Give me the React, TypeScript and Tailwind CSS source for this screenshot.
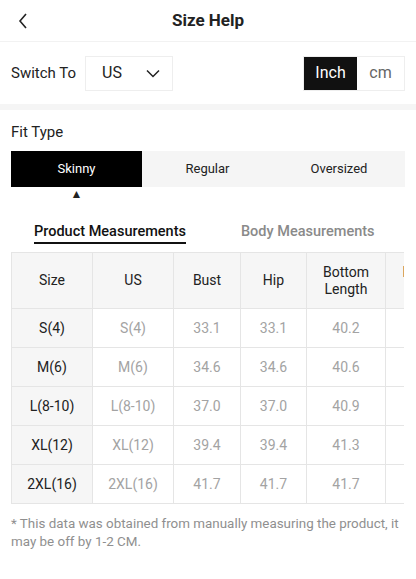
import React from "react";

const rows = [
  ["S(4)", "S(4)", "33.1", "33.1", "40.2", "26.0"],
  ["M(6)", "M(6)", "34.6", "34.6", "40.6", "27.6"],
  ["L(8-10)", "L(8-10)", "37.0", "37.0", "40.9", "29.9"],
  ["XL(12)", "XL(12)", "39.4", "39.4", "41.3", "32.3"],
  ["2XL(16)", "2XL(16)", "41.7", "41.7", "41.7", "34.6"],
];

const headers = ["Size", "US", "Bust", "Hip", "Bottom Length", "Bottom Width"];
const widths = ["w-[81px]", "w-[81px]", "w-[67px]", "w-[66px]", "w-[79px]", "w-[80px]"];

export default function App() {
  return (
    <div className="w-[416px] h-[579px] bg-white overflow-hidden text-[#222] font-['Roboto',sans-serif]">
      {/* Header */}
      <div className="relative flex h-[42px] items-center justify-center border-b border-[#f2f2f2]">
        <svg className="absolute left-[17px] top-[12px]" width="12" height="18" viewBox="0 0 12 18" fill="none">
          <path d="M9 2 L3 9 L9 16" stroke="#222" strokeWidth="1.6" />
        </svg>
        <span className="text-[17px] font-bold">Size Help</span>
      </div>

      {/* Switch row */}
      <div className="flex h-[62px] items-center px-[11px]">
        <span className="text-[15px] text-[#222]">Switch To</span>
        <div className="ml-[9px] flex h-[35px] w-[88px] items-center justify-between border border-[#eeeeee] pl-[16px] pr-[12px]">
          <span className="text-[16px]">US</span>
          <svg width="14" height="9" viewBox="0 0 14 9" fill="none">
            <path d="M1 1.5 L7 7.5 L13 1.5" stroke="#222" strokeWidth="1.5" />
          </svg>
        </div>
        <div className="ml-auto flex h-[35px] border border-[#eeeeee]">
          <div className="flex w-[53px] items-center justify-center bg-[#111] text-[16px] text-white">Inch</div>
          <div className="flex w-[47px] items-center justify-center text-[16px] text-[#666]">cm</div>
        </div>
      </div>

      <div className="h-[6px] bg-[#f5f5f5]" />

      {/* Fit type */}
      <div className="px-[11px] pt-[12px]">
        <div className="text-[15px] leading-[20px]">Fit Type</div>
        <div className="mt-[9px] flex h-[36px] bg-[#f5f5f5] text-[13px]">
          <div className="flex w-[131px] items-center justify-center bg-black text-white">Skinny</div>
          <div className="flex w-[131px] items-center justify-center text-[#222]">Regular</div>
          <div className="flex flex-1 items-center justify-center text-[#222]">Oversized</div>
        </div>
        <div className="flex w-[131px] justify-center pt-[1px] text-[12px] leading-[12px]">▲</div>
      </div>

      {/* Measurement tabs */}
      <div className="mt-[23px] flex items-start whitespace-nowrap px-[34px]">
        <div className="border-b-2 border-[#111] pb-[1px] text-[14.5px] font-medium leading-[18px] text-[#111]">
          Product Measurements
        </div>
        <div className="ml-[55px] text-[14.5px] font-medium leading-[18px] text-[#8a8a8a]">Body Measurements</div>
      </div>

      {/* Table, scrolls sideways */}
      <div className="ml-[11px] mt-[8px] w-[393px] overflow-hidden">
        <table className="w-[454px] max-w-none table-fixed border-collapse text-[14px]">
          <thead>
            <tr className="h-[56px] bg-[#f6f6f6]">
              {headers.map((h, i) => {
                const parts = h.split(" ");
                return (
                  <th
                    key={h}
                    className={`${widths[i]} border border-[#e5e5e5] px-1 text-center font-normal leading-[17px] text-[#222]`}
                  >
                    {parts.length > 1 ? (
                      <>
                        {parts[0]}
                        <br />
                        {parts[1]}
                      </>
                    ) : (
                      h
                    )}
                  </th>
                );
              })}
            </tr>
          </thead>
          <tbody>
            {rows.map((r) => (
              <tr key={r[0]} className="h-[39px]">
                {r.map((c, i) => (
                  <td
                    key={i}
                    className={
                      i === 0
                        ? "border border-[#e5e5e5] bg-[#f6f6f6] text-center text-[#222]"
                        : "border border-[#e5e5e5] text-center text-[#a3a3a3]"
                    }
                  >
                    {c}
                  </td>
                ))}
              </tr>
            ))}
          </tbody>
        </table>
      </div>

      <p className="mt-[11px] px-[11px] text-[13.4px] leading-[18px] text-[#8f8f8f]">
        * This data was obtained from manually measuring the product, it may be off by 1-2 CM.
      </p>
    </div>
  );
}
